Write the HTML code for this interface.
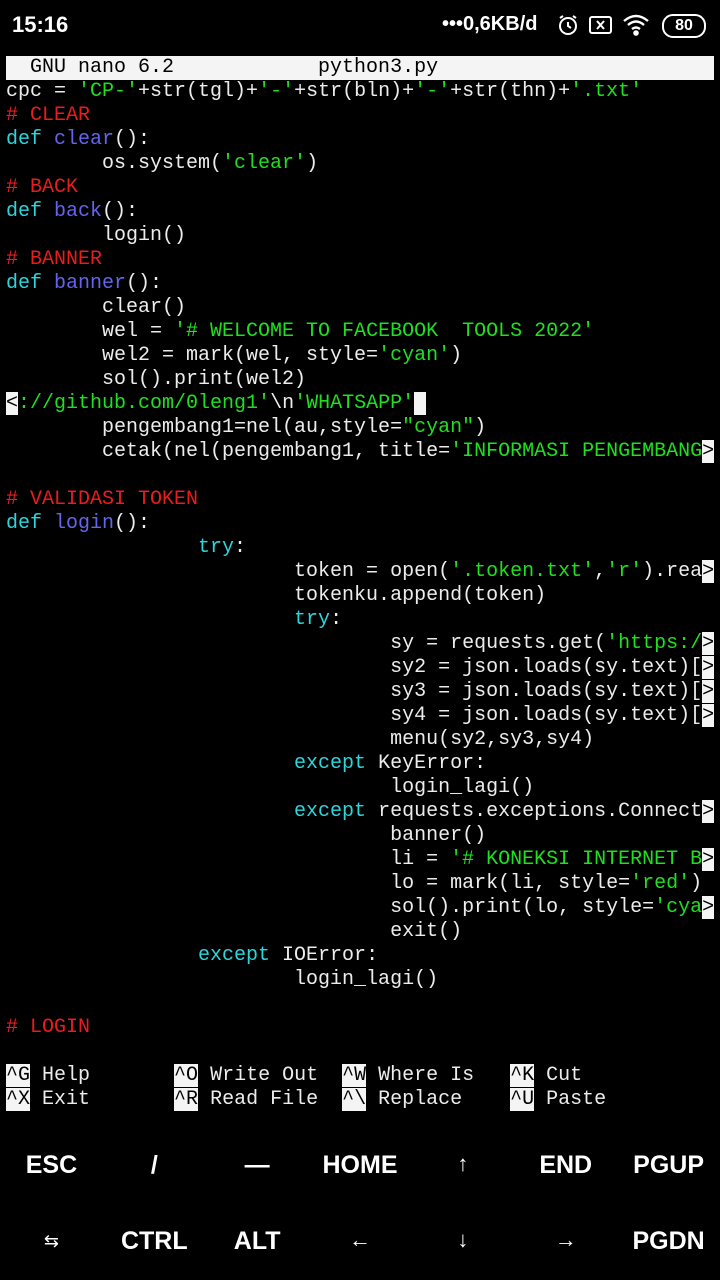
<!DOCTYPE html><html><head><meta charset="utf-8"><style>
body{margin:0;width:720px;height:1280px;background:#000;overflow:hidden;position:relative;font-family:"Liberation Mono",monospace;color:#ececec}
.sb{position:absolute;top:0;left:0;width:720px;height:50px;font-family:"Liberation Sans",sans-serif;font-weight:bold;color:#fff}
pre{position:absolute;left:6px;top:56px;margin:0;font-size:20px;line-height:24px;font-family:"Liberation Mono",monospace;white-space:pre}
.t{background:#f4f4f4;color:#000;display:inline-block;width:708px}
.g{color:#1ee01e}.r{color:#ea1c1c}.c{color:#2ad6dc}.b{color:#6464ee}
.i{background:#f4f4f4;color:#000}
.kb{position:absolute;left:0;width:720px;display:flex;font-family:"Liberation Sans",sans-serif;font-weight:bold;font-size:25px;color:#fff}
.kb div{width:102.86px;text-align:center}
</style></head><body>
<div class="sb"><span style="position:absolute;left:12px;top:12px;font-size:22px">15:16</span>
<span style="position:absolute;left:442px;top:13px;font-size:20px">•••0,6KB/d</span>
<svg style="position:absolute;left:556px;top:13px" width="24" height="24" viewBox="0 0 24 24" fill="none" stroke="#fff" stroke-width="2"><circle cx="12" cy="13" r="8"/><path d="M12 9v4l3 2M4 5l3-2M20 5l-3-2"/></svg>
<svg style="position:absolute;left:588px;top:14px" width="26" height="22" viewBox="0 0 26 22" fill="none" stroke="#fff" stroke-width="2"><rect x="2" y="3" width="21" height="16" rx="2"/><path d="M9 7l7 8M16 7l-7 8"/></svg>
<svg style="position:absolute;left:622px;top:13px" width="30" height="24" viewBox="0 0 30 24" fill="none" stroke="#fff" stroke-width="2.4"><path d="M2 8q12-10 24 0M6 12q8-7 16 0M10 16q4-3 8 0"/><circle cx="14" cy="20" r="1.6" fill="#fff"/></svg>
<div style="position:absolute;left:662px;top:14px;width:40px;height:20px;border:2px solid #fff;border-radius:11px;font-size:16px;text-align:center;line-height:20px;box-sizing:content-box">80</div></div>
<pre><span class="t">  GNU nano 6.2            python3.py                        </span>
cpc = <span class="g">'CP-'</span>+str(tgl)+<span class="g">'-'</span>+str(bln)+<span class="g">'-'</span>+str(thn)+<span class="g">'.txt'</span>
<span class="r"># CLEAR</span>
<span class="c">def</span> <span class="b">clear</span>():
        os.system(<span class="g">'clear'</span>)
<span class="r"># BACK</span>
<span class="c">def</span> <span class="b">back</span>():
        login()
<span class="r"># BANNER</span>
<span class="c">def</span> <span class="b">banner</span>():
        clear()
        wel = <span class="g">'# WELCOME TO FACEBOOK  TOOLS 2022'</span>
        wel2 = mark(wel, style=<span class="g">'cyan'</span>)
        sol().print(wel2)
<span class="i">&lt;</span><span class="g">://github.com/0leng1'</span>\n<span class="g">'WHATSAPP'</span><span class="i"> </span>
        pengembang1=nel(au,style=<span class="g">"cyan"</span>)
        cetak(nel(pengembang1, title=<span class="g">'INFORMASI PENGEMBANG</span><span class="i">&gt;</span>

<span class="r"># VALIDASI TOKEN</span>
<span class="c">def</span> <span class="b">login</span>():
                <span class="c">try</span>:
                        token = open(<span class="g">'.token.txt'</span>,<span class="g">'r'</span>).rea<span class="i">&gt;</span>
                        tokenku.append(token)
                        <span class="c">try</span>:
                                sy = requests.get(<span class="g">'https:/</span><span class="i">&gt;</span>
                                sy2 = json.loads(sy.text)[<span class="i">&gt;</span>
                                sy3 = json.loads(sy.text)[<span class="i">&gt;</span>
                                sy4 = json.loads(sy.text)[<span class="i">&gt;</span>
                                menu(sy2,sy3,sy4)
                        <span class="c">except</span> KeyError:
                                login_lagi()
                        <span class="c">except</span> requests.exceptions.Connect<span class="i">&gt;</span>
                                banner()
                                li = <span class="g">'# KONEKSI INTERNET B</span><span class="i">&gt;</span>
                                lo = mark(li, style=<span class="g">'red'</span>)
                                sol().print(lo, style=<span class="g">'cya</span><span class="i">&gt;</span>
                                exit()
                <span class="c">except</span> IOError:
                        login_lagi()

<span class="r"># LOGIN</span>

<span class="i">^G</span> Help       <span class="i">^O</span> Write Out  <span class="i">^W</span> Where Is   <span class="i">^K</span> Cut
<span class="i">^X</span> Exit       <span class="i">^R</span> Read File  <span class="i">^\</span> Replace    <span class="i">^U</span> Paste</pre>
<div class="kb" style="top:1151px"><div>ESC</div><div>/</div><div>—</div><div>HOME</div><div style="font-weight:normal;font-size:22px">↑</div><div>END</div><div>PGUP</div></div>
<div class="kb" style="top:1227px"><div style="font-size:18px;font-weight:normal;padding-top:4px">⇆</div><div>CTRL</div><div>ALT</div><div style="font-weight:normal;font-size:22px">←</div><div style="font-weight:normal;font-size:22px">↓</div><div style="font-weight:normal;font-size:22px">→</div><div>PGDN</div></div>
</body></html>
